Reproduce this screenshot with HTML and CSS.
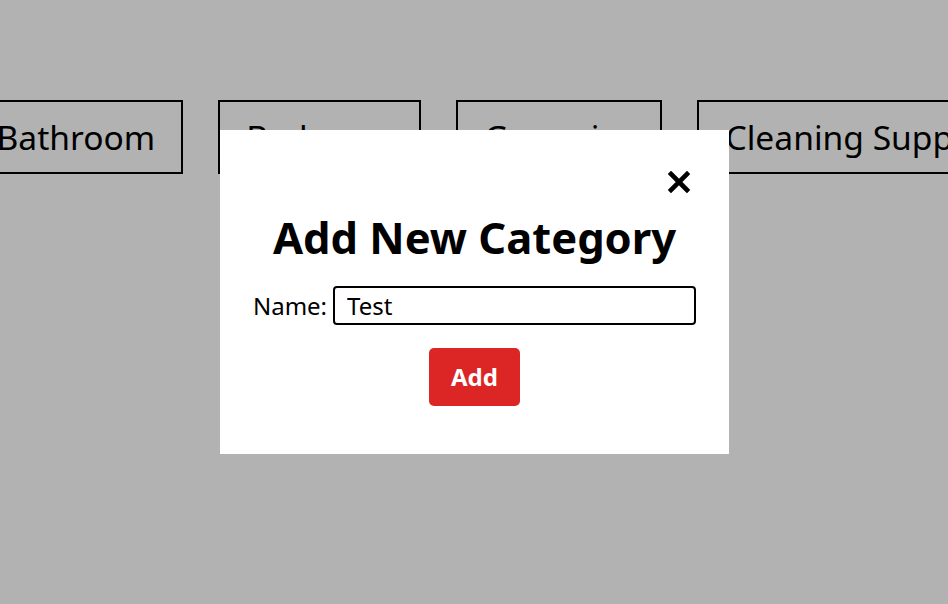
FILE: index.html
```html
<!DOCTYPE html>
<html lang="en">
<head>
<meta charset="utf-8">
<title>Categories</title>
<link rel="stylesheet" href="styles.css">
</head>
<body>
<main class="page">
  <div class="categories">
    <button class="category">Bathroom</button>
    <button class="category">Bedroom</button>
    <button class="category">Groceries</button>
    <button class="category">Cleaning Supplies</button>
  </div>
</main>
<div class="overlay">
  <div class="modal">
    <button class="close" aria-label="Close">
      <svg width="22" height="22" viewBox="0 0 22 22"><path d="M3 3 L19 19 M19 3 L3 19" stroke="#000" stroke-width="4.6" stroke-linecap="square" fill="none"/></svg>
    </button>
    <h2 class="title">Add New Category</h2>
    <form class="form">
      <div class="field">
        <label class="label" for="name">Name:</label>
        <input class="input" id="name" type="text" value="Test">
      </div>
      <button class="add" type="button">Add</button>
    </form>
  </div>
</div>
</body>
</html>
```
FILE: styles.css
```css
* { box-sizing: border-box; }
html, body { margin: 0; padding: 0; }
body {
  background: #ffffff;
  font-family: "Noto Sans", "Open Sans", sans-serif;
  color: #000;
  overflow: hidden;
  width: 948px;
  height: 604px;
}
.page { padding-top: 100px; }
.categories {
  display: flex;
  justify-content: center;
  gap: 35px;
  padding-left: 54px;
  white-space: nowrap;
}
.category {
  flex-shrink: 0;
  font-family: inherit;
  font-size: 33.6px;
  line-height: normal;
  padding: 12px 26px;
  height: 74px;
  border: 2px solid #000;
  background: transparent;
  color: #000;
}
.overlay {
  position: fixed;
  inset: 0;
  background: rgba(0, 0, 0, 0.3);
  display: flex;
  justify-content: center;
  align-items: flex-start;
}
.modal {
  margin-top: 130px;
  margin-left: 1px;
  width: 509px;
  background: #fff;
  padding: 41px 39px 48px;
  display: flex;
  flex-direction: column;
  align-items: center;
}
.close {
  align-self: flex-end;
  border: 0;
  background: none;
  padding: 0;
  width: 22px;
  height: 22px;
  display: block;
}
.close svg { display: block; }
.title {
  margin: 15px 0 0;
  font-size: 43.5px;
  font-weight: 700;
  line-height: 59px;
}
.form {
  display: flex;
  flex-direction: column;
  align-items: center;
  margin-top: 19px;
}
.field {
  display: flex;
  align-items: center;
  gap: 6px;
}
.label { font-size: 24px; }
.input {
  width: 363px;
  height: 39px;
  border: 2px solid #000;
  border-radius: 4px;
  padding: 0 12px;
  font-family: inherit;
  font-size: 24px;
  color: #000;
  outline: none;
}
.add {
  margin-top: 23px;
  background: #dc2626;
  color: #fff;
  border: 0;
  border-radius: 5px;
  font-family: inherit;
  font-weight: 700;
  font-size: 24px;
  line-height: 34px;
  padding: 12px 0;
  height: 58px;
  width: 91px;
}
```
